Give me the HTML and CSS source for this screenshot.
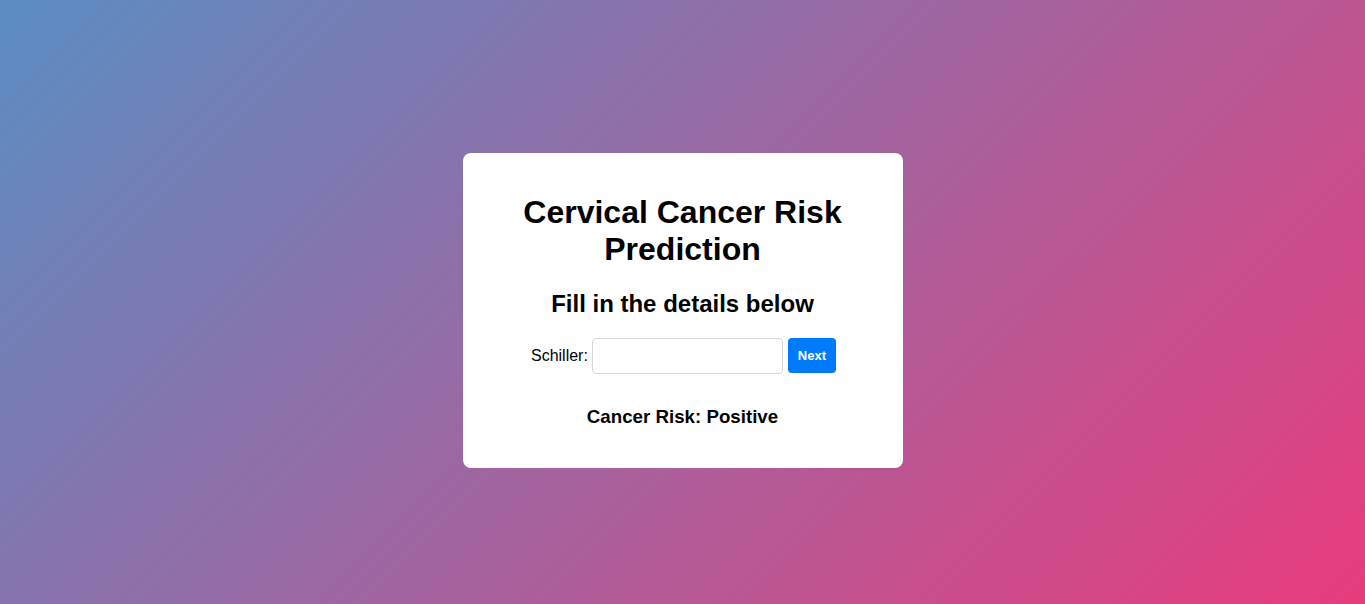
FILE: index.html
```
<!DOCTYPE html>
<html lang="en">
<head>
<meta charset="utf-8">
<title>Cervical Cancer Risk Prediction</title>
<link rel="stylesheet" href="styles.css">
</head>
<body>
<div class="page">
  <div class="card">
    <h1 class="title">Cervical Cancer Risk Prediction</h1>
    <h2 class="subtitle">Fill in the details below</h2>
    <form class="form">
      <label class="label" for="schiller">Schiller:</label>
      <input class="input" id="schiller" type="text">
      <button class="btn" type="button">Next</button>
    </form>
    <h3 class="result">Cancer Risk: Positive</h3>
  </div>
</div>
</body>
</html>
```

FILE: styles.css
```
html, body {
  margin: 0;
  padding: 0;
  height: 100%;
}
body {
  background: linear-gradient(135deg, #5a8ec3 0%, #e83c7c 100%);
  font-family: "Liberation Sans", Arial, sans-serif;
  color: #000;
  overflow: hidden;
}
.page {
  height: 100vh;
  box-sizing: border-box;
  padding-top: 17px;
  display: flex;
  align-items: center;
  justify-content: center;
}
.card {
  background: #fff;
  border-radius: 8px;
  width: 400px;
  padding: 20px;
  text-align: center;
}
.title {
  font-size: 32px;
  font-weight: bold;
  margin: 21.44px 0;
  line-height: normal;
}
.subtitle {
  font-size: 24px;
  font-weight: bold;
  margin: 19.92px 0;
}
.form {
  display: flex;
  justify-content: center;
  align-items: center;
  margin: 0;
  padding-left: 2px;
}
.label {
  font-size: 16px;
  margin-right: 4px;
}
.input {
  box-sizing: border-box;
  width: 191px;
  height: 36px;
  padding: 10px;
  border: 1px solid #d6d6d6;
  border-radius: 4px;
  font-size: 13px;
  font-family: "Liberation Sans", Arial, sans-serif;
  outline: none;
}
.btn {
  margin-left: 5px;
  background: #007bff;
  color: #fff;
  border: none;
  border-radius: 4px;
  padding: 10px;
  height: 35px;
  font-size: 13px;
  font-weight: bold;
  font-family: "Liberation Sans", Arial, sans-serif;
  cursor: pointer;
}
.result {
  font-size: 18.72px;
  font-weight: bold;
  margin: 32px 0 20.72px;
}
```
